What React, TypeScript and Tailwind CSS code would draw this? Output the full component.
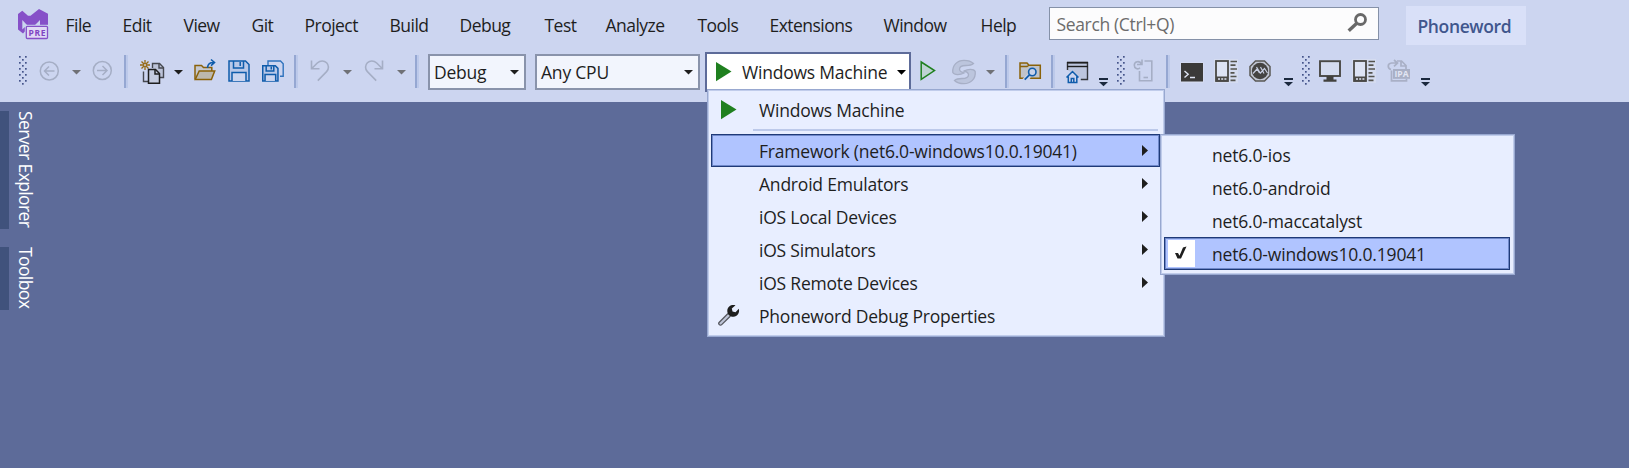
import React from "react";

/* Toolbar glyphs share one coordinate space: x is the window x, y runs 50-92. */
function Slot({ x, to, children }: { x: number; to: number; children?: React.ReactNode }) {
  return (
    <svg className="block h-[42px] shrink-0" width={to - x} viewBox={`${x} 50 ${to - x} 42`} fill="none">
      {children}
    </svg>
  );
}

function Sep({ x }: { x: number }) {
  return (
    <>
      <rect x={x} y={55} width={2} height={33} fill="#95a7d2" />
      <rect x={x + 2} y={55} width={2} height={33} fill="#bcc9ea" />
    </>
  );
}

function Caret({ x, color = "#1e1e1e", y = 70 }: { x: number; color?: string; y?: number }) {
  return <path d={`M${x} ${y}h9l-4.5 4.6z`} fill={color} />;
}

function Grip({ x }: { x: number }) {
  const dots: React.ReactNode[] = [];
  for (let r = 0; r < 10; r++) {
    const y = 56 + r * 3;
    const xs = r % 2 === 0 ? [x, x + 6] : [x + 3];
    xs.forEach((dx) => dots.push(<rect key={`${r}-${dx}`} x={dx} y={y} width={1.7} height={1.7} fill="#45548a" />));
  }
  return <>{dots}</>;
}

function Overflow({ x }: { x: number }) {
  return (
    <>
      <rect x={x} y={78} width={9} height={2} fill="#1b293e" />
      <path d={`M${x} 82h9l-4.5 4.3z`} fill="#1b293e" />
    </>
  );
}

function Floppy({ x, y, s }: { x: number; y: number; s: number }) {
  return (
    <g transform={`translate(${x} ${y}) scale(${s})`} stroke="#0f5cab" strokeWidth={1.5 / s}>
      <path d="M1 1h16.5L21 4.500V21H1z" fill="#0f5cab" fillOpacity={0.1} />
      <path d="M5.500 1v7h10V1M12.200 2v4" />
      <path d="M4 21v-8.500h14V21" fill="#cbd5ef" />
    </g>
  );
}

function PhoneList({ x }: { x: number }) {
  return (
    <g>
      <rect x={x - 1} y={59} width={24} height={24} fill="#d5dcf0" />
      <rect x={x + 1} y={61} width={12} height={20} stroke="#4a4946" strokeWidth={1.8} fill="#dde3f4" />
      <rect x={x + 1} y={76.500} width={12} height={5} fill="#4a4946" />
      <path d={`M${x + 3} 79h2m1.200 0h2m1.200 0h2`} stroke="#dfe4f3" strokeWidth={1.500} />
      <path
        d={`M${x + 15.500} 61.500h6.500M${x + 15.500} 65.200h5M${x + 15.500} 69h6.500M${x + 15.500} 72.800h4M${x + 15.500} 76.500h6M${x + 15.500} 80.300h5`}
        stroke="#55544f"
        strokeWidth={1.700}
      />
    </g>
  );
}

const menus: [string, string][] = [
  ["File", "w-[57px]"],
  ["Edit", "w-[61px]"],
  ["View", "w-[68px]"],
  ["Git", "w-[53px]"],
  ["Project", "w-[85px]"],
  ["Build", "w-[70px]"],
  ["Debug", "w-[85px]"],
  ["Test", "w-[61px]"],
  ["Analyze", "w-[92px]"],
  ["Tools", "w-[72px]"],
  ["Extensions", "w-[114px]"],
  ["Window", "w-[97px]"],
  ["Help", "w-[68px]"],
];

function Logo() {
  return (
    <svg className="ml-[17px] mt-[8px] h-8 w-[32px] shrink-0" viewBox="0 0 32 32" fill="none">
      <path d="M1 6l4.300-3.300L11 7.700h2.500L22 .9l9 4.800V19H12l-6 6.500-5-4z" fill="#8650c8" />
      <path d="M5.300 12l4.700 5-4.700 4.500zM23 12v6h-6z" fill="#cbd5ef" />
      <rect x={7.800} y={16.800} width={24.200} height={15.200} fill="#cbd5ef" />
      <rect x={9.300} y={18.300} width={21.200} height={12.200} rx={1} fill="#e0d9f5" stroke="#8650c8" strokeWidth={1.300} />
      <text x={19.900} y={27.500} textAnchor="middle" fontFamily="Open Sans, sans-serif" fontWeight="700" fontSize="8.500" fill="#7f45c3" textLength="17">
        PRE
      </text>
    </svg>
  );
}

function MenuBar() {
  return (
    <div className="flex h-[50px] items-start">
      <Logo />
      <nav className="ml-[16.500px] flex pt-[12px]">
        {menus.map(([label, w]) => (
          <span key={label} className={`${w} shrink-0 tracking-[-0.03em]`}>
            {label}
          </span>
        ))}
      </nav>
      <div className="mt-[7px] flex h-[33px] w-[330px] shrink-0 items-center border border-[#8591a8] bg-[#fcfcfd] pl-[7px]">
        <span className="grow tracking-[-0.02em] text-[#6c6c6c]">Search (Ctrl+Q)</span>
        <svg className="mr-[10px] -mt-[2px] h-[21px] w-[21px]" viewBox="0 0 21 21" fill="none" stroke="#686868">
          <circle cx={13.500} cy={7.500} r={5} strokeWidth={2.800} />
          <path d="M9.800 11.200L1.700 18.800" strokeWidth={3.400} />
        </svg>
      </div>
      <div className="ml-[27px] mt-[6px] flex h-[39px] w-[120px] shrink-0 items-center bg-[#d9e0f8] pl-[12px] font-semibold tracking-[-0.022em] text-[#40568d]">
        Phoneword
      </div>
    </div>
  );
}

function Combo({ label, cls }: { label: string; cls: string }) {
  return (
    <div className={`${cls} mt-[4px] flex h-[36px] shrink-0 items-center border-2 border-[#8993ab] bg-[#f2f5fd] pl-[4px] pr-[5px]`}>
      <span className="grow tracking-[-0.012em]">{label}</span>
      <svg className="h-[5px] w-[9px]" viewBox="0 0 9 5">
        <path d="M0 0h9L4.500 4.600z" fill="#1e1e1e" />
      </svg>
    </div>
  );
}

function ToolBar() {
  const gray = "#a5aec5";
  const comma =
    "M952.800 72.500C952 65 957.500 60.300 964 60.300c4 0 7.500 1.200 9.500 3.200-2 1.800-4.500 2-7.500 2-4.500 0-6.500 1.800-6.500 3.800 0 2.200 2 3 4.500 3.700-3.500 1.800-9.500 2.500-11.200-.5z";
  return (
    <div className="flex h-[52px] items-start">
      <Slot x={0} to={428}>
        <Grip x={19} />
        <g stroke={gray} strokeWidth={1.500}>
          <circle cx={49.300} cy={71} r={9} />
          <path d="M54.500 71H44.500m4.500-4.500L44.500 71l4.500 4.500" />
          <circle cx={102.300} cy={70.500} r={9} />
          <path d="M97 70.500h10m-4.500-4.500l4.500 4.500-4.500 4.500" />
        </g>
        <Caret x={72} color="#6f7176" />
        <Sep x={124} />
        <g>
          <path d="M145 60v10M140 65h10M141.500 61.500l7 7M148.500 61.500l-7 7" stroke="#966a14" strokeWidth={1.300} />
          <circle cx={145} cy={65} r={1.500} fill="#cbd5ef" stroke="#966a14" />
          <path d="M152.500 68V63.500h7l4 4V77.500h-5" stroke="#45484f" strokeWidth={1.400} fill="#bcc3d8" />
          <path d="M159 63.500V68h4.500" stroke="#45484f" strokeWidth={1.400} />
          <path d="M143.500 71.500v10h5" stroke="#45484f" strokeWidth={1.400} />
          <path d="M148.500 69.500h7l4 4v9.800h-11z" stroke="#1e1e1e" strokeWidth={1.500} fill="#c5cce0" />
          <path d="M155 69.500V74h4.500" stroke="#1e1e1e" strokeWidth={1.500} />
        </g>
        <Caret x={174} />
        <g>
          <path d="M195 79.300V65.500h6.500l2 2h8.300V71" stroke="#8a6209" strokeWidth={1.500} fill="#c5c8d0" />
          <path d="M195.200 79.500l4-8.500h15.500l-3.300 8.500z" stroke="#8a6209" strokeWidth={1.500} fill="#bcb8ae" />
          <path d="M207.500 68c.2-4 2.500-5.700 6.500-5.500M211 59.500l3.500 3-3.500 3.200" stroke="#0f5cab" strokeWidth={1.600} />
        </g>
        <Floppy x={228} y={60} s={1} />
        <path d="M268 65V61h12.500l2.700 2.700V76.300H280" stroke="#2f73bd" strokeWidth={1.400} />
        <Floppy x={262} y={65} s={0.760} />
        <Sep x={294} />
        <g stroke={gray} strokeWidth={1.600}>
          <path d="M311.500 60.500v8.200h8M311.800 68.500l5.500-5.500c3-2.800 7-2.500 9.300-.2s2.600 6.200 0 8.800l-8.800 9" />
          <path d="M382.500 60.500v8.200h-8M382.200 68.500l-5.500-5.500c-3-2.800-7-2.500-9.300-.2s-2.600 6.200 0 8.800l8.800 9" />
        </g>
        <Caret x={343} color="#6f7176" />
        <Caret x={397} color="#6f7176" />
        <Sep x={415} />
      </Slot>
      <Combo label="Debug" cls="w-[98px]" />
      <Combo label="Any CPU" cls="ml-[9px] w-[165px]" />
      <div className="ml-[5px] mt-[2px] flex h-[40px] w-[206px] shrink-0 items-center border-2 border-[#5d6b99] bg-white pl-[9px] pr-[3px]">
        <svg className="h-5 w-4" viewBox="0 0 16 20">
          <path d="M0 0l15.500 9.500L0 19.300z" fill="#1f801f" />
        </svg>
        <span className="ml-[10px] grow tracking-[-0.012em]">Windows Machine</span>
        <svg className="h-[5px] w-[9px]" viewBox="0 0 9 5">
          <path d="M0 0h9L4.500 4.800z" fill="#000" />
        </svg>
      </div>
      <Slot x={911} to={1629}>
        <path d="M921.200 62v17.300l13.300-8.700z" stroke="#1f801f" strokeWidth={1.500} fill="#bed3d3" />
        <g stroke="#a7afc6" strokeWidth={1.300} fill="#bcc5dd">
          <path d={comma} />
          <path d={comma} transform="rotate(180 964 72)" />
        </g>
        <Caret x={986} color="#6f7176" />
        <Sep x={1005} />
        <g>
          <path d="M1020 78.200V63h7l2 2.300h11.300v13z" stroke="#8a6209" strokeWidth={1.500} fill="#bfc3cb" />
          <path d="M1020 66.500h7l2-1.300" stroke="#8a6209" strokeWidth={1.300} />
          <path d="M1023 82l6-6" stroke="#cbd5ef" strokeWidth={5} />
          <circle cx={1032.300} cy={72} r={3.700} stroke="#0f5cab" strokeWidth={1.600} fill="#c7d2ea" />
          <path d="M1029.700 74.600l-5 5" stroke="#0f5cab" strokeWidth={1.800} />
        </g>
        <Sep x={1051} />
        <g>
          <path d="M1067.500 70V62.700h20v16.800h-7" stroke="#333539" strokeWidth={1.400} fill="#bcc5dd" />
          <path d="M1067 66.500h21" stroke="#1e1e1e" strokeWidth={1.400} />
          <path d="M1067 62.500h21" stroke="#1e1e1e" strokeWidth={1.600} />
          <path d="M1064.500 78l8-8 8 8v5h-16z" fill="#cbd5ef" />
          <path d="M1066.500 77.500l6-6 6 6M1068.300 76.500v6h8.500v-6M1071.300 82.500v-4h2.500v4" stroke="#0f5cab" strokeWidth={1.500} fill="none" />
        </g>
        <Overflow x={1099} />
        <Grip x={1117} />
        <g stroke={gray} strokeWidth={1.600}>
          <path d="M1144.500 61h7.300v19.700h-12.300V71" />
          <path d="M1143.500 77.500h4.500" />
          <path d="M1142 59.500v5h-5M1141.500 64.200c-1.500-3.600-7-3.400-7.200.8-.1 3.600 3.600 5 5.700 2.800" />
        </g>
        <Sep x={1166} />
        <rect x={1180.500} y={62.500} width={23} height={20} fill="#dbe1f2" />
        <rect x={1181} y={63} width={22} height={18.500} fill="#3b3a39" />
        <path d="M1184.500 71l3.700 3.300-3.700 3.300M1190 77.500h5" stroke="#dfe4f3" strokeWidth={1.400} />
        <PhoneList x={1215} />
        <g>
          <path d="M1255.500 61h9l5.500 5.500v9l-5.500 5.500h-9l-5.500-5.500v-9z" stroke="#5a5956" strokeWidth={1.500} fill="#c2c7d4" />
          <circle cx={1260} cy={71} r={8.200} fill="#454442" />
          <path d="M1253 73.500l4-4.500 2.500 4M1256.500 67l4 6.500M1260 73.500l4.500-5 3 4.500M1260.500 67l3.500 6.500" stroke="#c8cfe2" strokeWidth={1.200} />
        </g>
        <Overflow x={1284} />
        <Grip x={1302} />
        <g>
          <rect x={1320} y={61.200} width={20} height={14.800} stroke="#4a4946" strokeWidth={1.900} fill="#d5dcf0" />
          <path d="M1326.500 76h7v3.500h3v2.300h-13v-2.300h3z" fill="#42413e" />
        </g>
        <PhoneList x={1353} />
        <g stroke="#a9b0c6" strokeWidth={1.700}>
          <path d="M1391.500 70.500V80.800h15V79M1397 61h4.500l4.500 4.500V69M1401 61v5h5" />
          <path d="M1391 69.500c-3.500-1-4-6 .5-6.500h6M1394 60l3.500 3-3.500 3.300" />
          <rect x={1393} y={69} width={17} height={9.800} fill="#a9b0c6" stroke="none" />
          <text x={1401.500} y={77} textAnchor="middle" fontFamily="Open Sans, sans-serif" fontWeight="700" fontSize="8.500" fill="#e2e6f4" stroke="none" textLength="14">
            IPA
          </text>
        </g>
        <Overflow x={1421} />
      </Slot>
    </div>
  );
}

function Row({ label, icon, arrow, active }: { label: string; icon?: React.ReactNode; arrow?: boolean; active?: boolean }) {
  return (
    <div
      className={`flex h-[33px] items-center border pr-[11px] ${
        active ? "border-[#1f3a78] bg-[#b0c4ff] shadow-[inset_0_0_0_1px_#6f88c9]" : "border-transparent"
      }`}
    >
      <span className="flex w-[47px] shrink-0 justify-start">{icon}</span>
      <span className="grow tracking-[-0.012em]">{label}</span>
      {arrow && (
        <svg className="-mt-[1px] h-[11px] w-[6px]" viewBox="0 0 6 11">
          <path d="M0 0l6 5.500L0 11z" fill="#1e1e1e" />
        </svg>
      )}
    </div>
  );
}

function RunMenu() {
  return (
    <div className="absolute left-[707px] top-[89px] h-[248px] w-[458px] border border-[#98a8d0] bg-[#e8eeff] pl-[3px] pr-[4px] pt-[4px] shadow-[inset_0_0_0_1px_#c0cceb]">
      <div className="-mt-[1px]">
        <Row
          label="Windows Machine"
          icon={
            <svg className="ml-[9px] h-5 w-4" viewBox="0 0 16 20">
              <path d="M0 0l15.500 9.500L0 19.300z" fill="#1f801f" />
            </svg>
          }
        />
      </div>
      <div className="mb-[3px] ml-[42px] mr-[2px] mt-[3px] h-[2px] bg-[#bcc9ea]" />
      <Row label="Framework (net6.0-windows10.0.19041)" arrow active />
      <Row label="Android Emulators" arrow />
      <Row label="iOS Local Devices" arrow />
      <Row label="iOS Simulators" arrow />
      <Row label="iOS Remote Devices" arrow />
      <Row
        label="Phoneword Debug Properties"
        icon={
          <svg className="-mt-[2px] ml-[6px] h-[22px] w-[22px]" viewBox="0 0 22 22" fill="none">
            <path d="M10 9.500L1.300 18.200a1.600 1.600 0 0 0 2.400 2.400L12.500 12" stroke="#55575e" strokeWidth={1.300} fill="#bfc5d8" />
            <path d="M17.500 1.300C14 0 9.500 2 9.300 6.500c-.2 4 2.700 6.500 6.200 6.300 3.800-.2 6.500-3.800 5.300-8l-3.300 3.500-3-.7-.7-3z" fill="#1e1e1e" />
          </svg>
        }
      />
    </div>
  );
}

function SubRow({ label, checked }: { label: string; checked?: boolean }) {
  return (
    <div
      className={`flex h-[33px] items-center border ${
        checked ? "border-[#1f3a78] bg-[#b0c4ff] shadow-[inset_0_0_0_1px_#6f88c9]" : "border-transparent"
      }`}
    >
      <span className="flex w-[47px] shrink-0 pl-[3px]">
        {checked && (
          <svg className="h-[27px] w-[27px] bg-white" viewBox="0 0 27 27" fill="none">
            <path d="M7 13h3l1.500 2.800L15 7.500l3.500-1L13 18.500h-3.500z" fill="#1e1e1e" />
          </svg>
        )}
      </span>
      <span className="tracking-[-0.01em]">{label}</span>
    </div>
  );
}

function FrameworkMenu() {
  return (
    <div className="absolute left-[1160px] top-[134px] h-[141px] w-[355px] border border-[#98a8d0] bg-[#e8eeff] pl-[3px] pr-[4px] pt-[3px] shadow-[inset_0_0_0_1px_#c0cceb]">
      <SubRow label="net6.0-ios" />
      <SubRow label="net6.0-android" />
      <SubRow label="net6.0-maccatalyst" />
      <SubRow label="net6.0-windows10.0.19041" checked />
    </div>
  );
}

export default function App() {
  return (
    <div className="relative h-[468px] w-[1629px] overflow-hidden whitespace-nowrap bg-[#5d6b99] font-['Open_Sans','Noto_Sans',sans-serif] text-[17.5px] leading-[26px] text-[#1e1e1e]">
      <header className="h-[102px] bg-[#ccd5f0]">
        <MenuBar />
        <ToolBar />
      </header>
      <aside className="flex w-[40px] flex-col gap-[18px] pt-[9px] text-white">
        <div className="flex h-[118px] border-l-[9px] border-[#40527c] pl-[4px]">
          <span className="tracking-[-0.035em] [writing-mode:vertical-rl]">Server Explorer</span>
        </div>
        <div className="flex h-[63px] border-l-[9px] border-[#40527c] pl-[4px]">
          <span className="tracking-[-0.035em] [writing-mode:vertical-rl]">Toolbox</span>
        </div>
      </aside>
      <RunMenu />
      <FrameworkMenu />
    </div>
  );
}
